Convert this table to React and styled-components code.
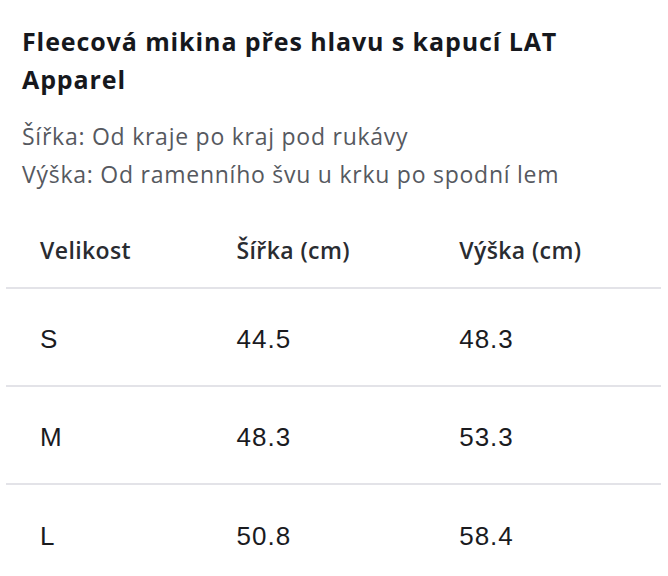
import React from 'react'
import styled, { createGlobalStyle } from 'styled-components'

const GlobalStyle = createGlobalStyle`
    html, body {
        margin: 0;
        padding: 0;
        background: #ffffff;
    }
    body {
        font-family: "Open Sans", "Noto Sans", Arial, sans-serif;
        -webkit-font-smoothing: antialiased;
    }
`;

const rows = [
    { size: 'S', width: '44.5', height: '48.3' },
    { size: 'M', width: '48.3', height: '53.3' },
    { size: 'L', width: '50.8', height: '58.4' },
]

function App() {
    return (
        <>
            <GlobalStyle />
            <Page>
                <Intro>
                    <Title>Fleecová mikina přes hlavu s kapucí LAT Apparel</Title>
                    <Note>Šířka: Od kraje po kraj pod rukávy</Note>
                    <Note>Výška: Od ramenního švu u krku po spodní lem</Note>
                </Intro>
                <Table>
                    <colgroup>
                        <col style={{ width: '30%' }} />
                        <col style={{ width: '34%' }} />
                        <col style={{ width: '36%' }} />
                    </colgroup>
                    <thead>
                        <tr>
                            <HeadCell>Velikost</HeadCell>
                            <HeadCell>Šířka (cm)</HeadCell>
                            <HeadCell>Výška (cm)</HeadCell>
                        </tr>
                    </thead>
                    <tbody>
                        {
                            rows.map((row, index) => {
                                return <Row key={row.size} $last={index === rows.length - 1}>
                                    <Cell>{row.size}</Cell>
                                    <Cell>{row.width}</Cell>
                                    <Cell>{row.height}</Cell>
                                </Row>
                            })
                        }
                    </tbody>
                </Table>
            </Page>
        </>
    )
}

const Page = styled.div`
    width: 668px;
    padding: 22px 7px 0 6px;
    box-sizing: border-box;
`;

const Intro = styled.div`
    padding: 0 16px;
    margin-bottom: 8px;
`;

const Title = styled.h2`
    margin: 0 0 19px;
    width: 580px;
    font-size: 25px;
    line-height: 38px;
    font-weight: 700;
    color: #16181d;
    letter-spacing: 0.9px;
`;

const Note = styled.p`
    margin: 0;
    font-size: 23px;
    line-height: 38px;
    color: #56595f;
    letter-spacing: 0.75px;
`;

const Table = styled.table`
    width: 655px;
    border-collapse: collapse;
    table-layout: fixed;
`;

const HeadCell = styled.th`
    text-align: left;
    vertical-align: bottom;
    padding: 0 0 22px 34px;
    height: 87px;
    box-sizing: border-box;
    font-size: 23px;
    line-height: 30px;
    font-weight: 600;
    color: #2a2c31;
    letter-spacing: 0.4px;
    border-bottom: 2px solid #e3e3e8;
`;

const Row = styled.tr`
    td {
        border-bottom: ${props => props.$last ? 'none' : '2px solid #e3e3e8'};
    }
`;

const Cell = styled.td`
    padding: 5px 0 0 34px;
    height: 98px;
    box-sizing: border-box;
    font-family: "Liberation Sans", Arial, sans-serif;
    font-size: 26px;
    letter-spacing: 1px;
    color: #1a1b1f;
`;

export default App
